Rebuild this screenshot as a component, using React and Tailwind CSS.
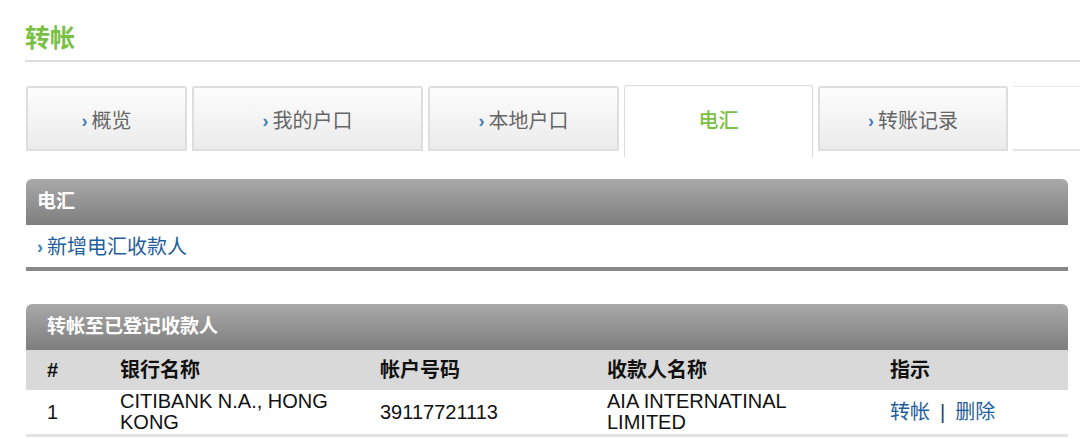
const font = { fontFamily: '"Liberation Sans", "Noto Sans CJK SC", sans-serif' }

const tabs = [
  { label: '概览', w: 'w-[161px]' },
  { label: '我的户口', w: 'w-[231px]' },
  { label: '本地户口', w: 'w-[191px]' },
  { label: '电汇', w: 'w-[189px]', active: true },
  { label: '转账记录', w: 'w-[190px]' },
]

function Chevron() {
  return <span className="mr-[4px] text-[18px] font-bold text-[#3f7db8]">›</span>
}

function Tab({ label, w, active }) {
  if (active) {
    return (
      <div className={`${w} -mt-px h-[72px] shrink-0 rounded-t-[3px] border border-b-0 border-[#dadada] bg-white pb-[2px] flex items-center justify-center text-[20px] font-medium text-[#79c142]`}>
        {label}
      </div>
    )
  }
  return (
    <div className={`${w} h-[65px] shrink-0 rounded-t-[3px] border-2 border-[#dedede] bg-gradient-to-b from-[#fdfdfd] to-[#ebebeb] pt-[5px] flex items-center justify-center text-[20px] text-[#666]`}>
      <Chevron />
      {label}
    </div>
  )
}

function BarHeader({ children, pad }) {
  return (
    <div className={`h-[46px] rounded-t-[6px] bg-gradient-to-b from-[#a9a9a9] to-[#7e7e7e] flex items-center ${pad} text-[19px] font-bold text-white`}>
      {children}
    </div>
  )
}

export default function App() {
  return (
    <div className="h-[439px] w-[1080px] overflow-hidden bg-white pl-[25px]" style={font}>
      <div className="border-b-2 border-[#dedede] pt-[22px] pb-[6px]">
        <h1 className="text-[25px] font-bold leading-[32px] text-[#7ac143]">转帐</h1>
      </div>

      <div className="mt-[24px] ml-px flex h-[65px] items-start gap-[5px]">
        {tabs.map((t) => (
          <Tab key={t.label} {...t} />
        ))}
        <div className="h-[65px] flex-1 border-t border-b-2 border-[#e6e6e6]" />
      </div>

      <div className="mt-[28px] ml-px mr-[12px]">
        <BarHeader pad="pl-[11px]">电汇</BarHeader>
        <div className="flex h-[46px] items-center border-b-4 border-[#878787] pl-[11px] pt-[2px] text-[20px] text-[#1f5e9c]">
          <Chevron />
          新增电汇收款人
        </div>
      </div>

      <div className="mt-[33px] ml-px mr-[12px]">
        <BarHeader pad="pl-[21px]">转帐至已登记收款人</BarHeader>
        <div className="grid h-[40px] grid-cols-[94px_260px_227px_283px_1fr] items-center bg-[#d9d9d9] text-[20px] font-bold text-[#111]">
          <div className="pl-[21px]">#</div>
          <div>银行名称</div>
          <div>帐户号码</div>
          <div>收款人名称</div>
          <div>指示</div>
        </div>
        <div className="grid h-[47px] grid-cols-[94px_260px_227px_283px_1fr] items-center border-b-[3px] border-[#e3e3e3] text-[20px] leading-[21px] text-[#111]">
          <div className="pl-[21px]">1</div>
          <div>
            CITIBANK N.A., HONG
            <br />
            KONG
          </div>
          <div>39117721113</div>
          <div>
            AIA INTERNATINAL
            <br />
            LIMITED
          </div>
          <div className="text-[#1f5e9c]">
            <span>转帐</span>
            <span className="mx-[10px] text-[#1a3f73]">|</span>
            <span>删除</span>
          </div>
        </div>
      </div>
    </div>
  )
}
